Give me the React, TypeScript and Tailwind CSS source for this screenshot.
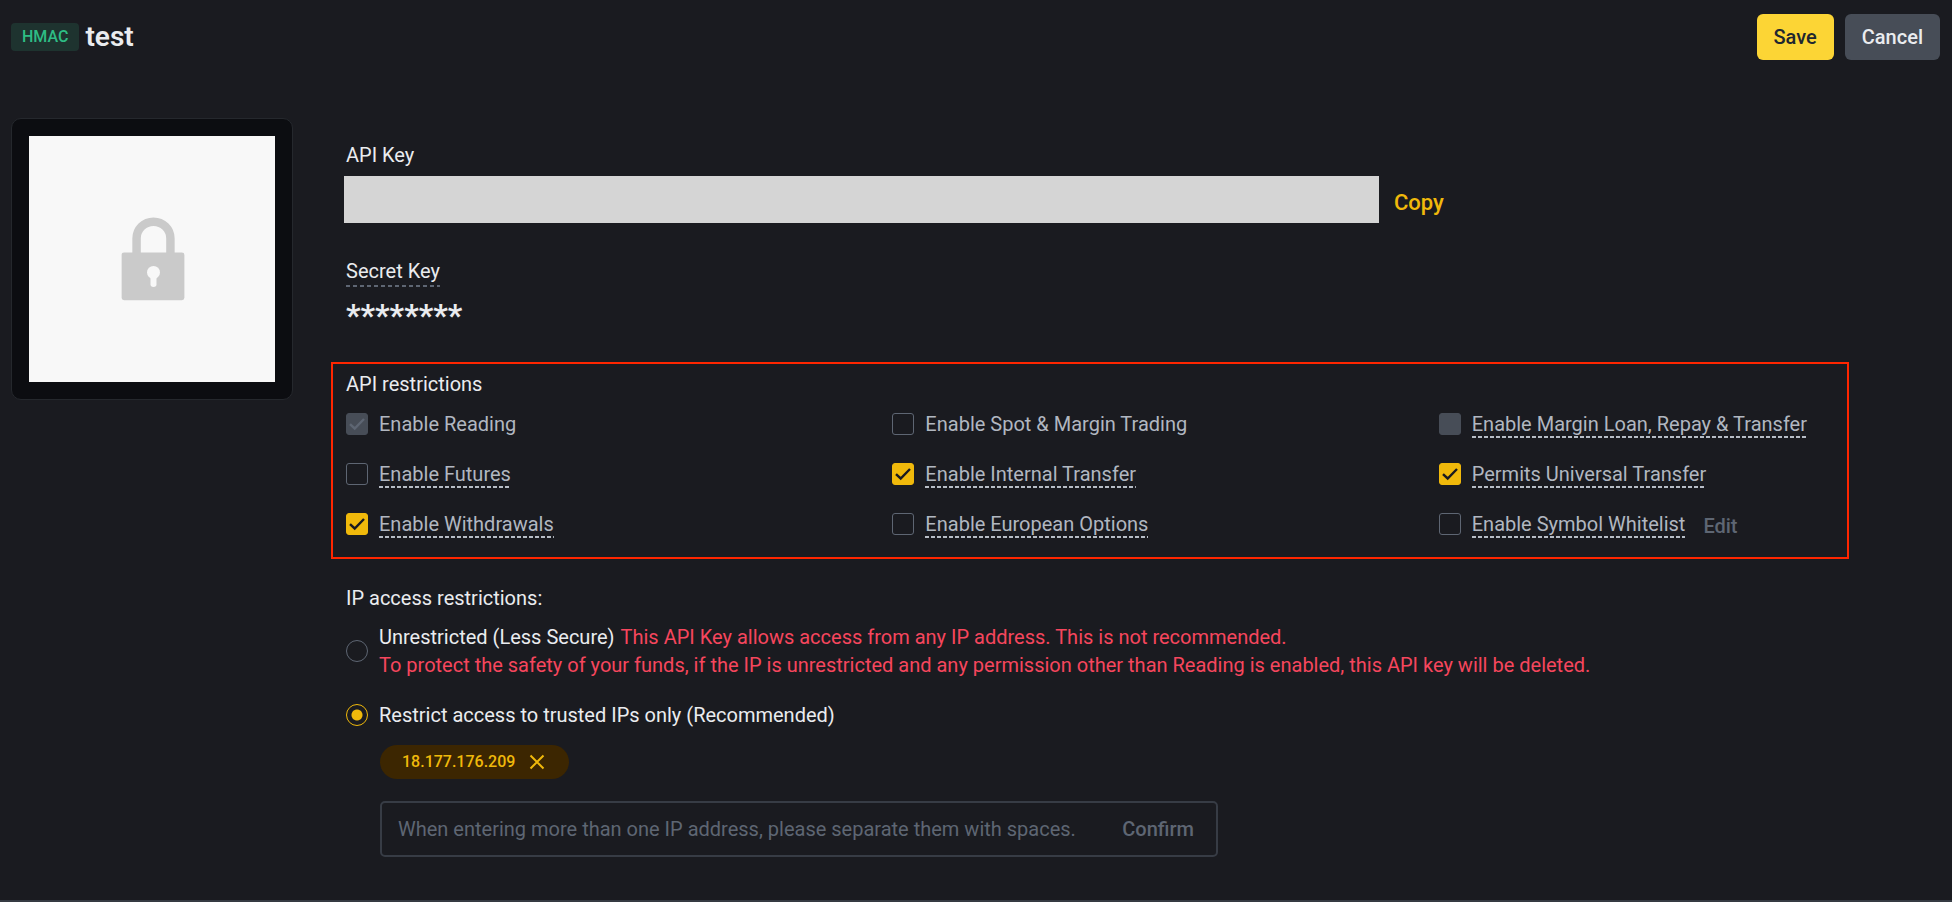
import { useState } from "react";

interface Restriction {
  id: string;
  label: string;
  hint?: boolean;
  disabled?: boolean;
  editable?: boolean;
}

const restrictions: Restriction[] = [
  { id: "reading", label: "Enable Reading", disabled: true },
  { id: "spot", label: "Enable Spot & Margin Trading" },
  { id: "loan", label: "Enable Margin Loan, Repay & Transfer", hint: true, disabled: true },
  { id: "futures", label: "Enable Futures", hint: true },
  { id: "internal", label: "Enable Internal Transfer", hint: true },
  { id: "universal", label: "Permits Universal Transfer", hint: true },
  { id: "withdrawals", label: "Enable Withdrawals", hint: true },
  { id: "options", label: "Enable European Options", hint: true },
  { id: "whitelist", label: "Enable Symbol Whitelist", hint: true, editable: true },
];

const dashed =
  "bg-[repeating-linear-gradient(90deg,#b7bdc6_0_4px,transparent_4px_6px)] bg-[length:100%_2px] bg-bottom bg-no-repeat";
const dashedMuted =
  "bg-[repeating-linear-gradient(90deg,#5e6673_0_4px,transparent_4px_7px)] bg-[length:100%_2px] bg-bottom bg-no-repeat";

function LockPicture() {
  return (
    <div className="w-[282px] shrink-0 self-start rounded-[10px] border border-[#25282d] bg-[#0c0d11] p-[17px]">
      <svg viewBox="0 0 247 247" className="block w-full bg-[#f8f8f8]" role="img" aria-label="Locked">
        <path d="M108 120V103a17 17 0 0 1 34 0v17" fill="none" stroke="#cacaca" strokeWidth="8.5" />
        <rect x="93" y="117" width="63" height="48" rx="2.5" fill="#cacaca" />
        <circle cx="125" cy="137" r="6.5" fill="#f8f8f8" />
        <path d="M122 140h6v9a3 2.500 0 0 1-6 0z" fill="#f8f8f8" />
      </svg>
    </div>
  );
}

interface RestrictionItemProps {
  item: Restriction;
  checked: boolean;
  onToggle: () => void;
}

function RestrictionItem({ item, checked, onToggle }: RestrictionItemProps) {
  return (
    <div className="flex items-center">
      <span className="grid size-[22px] shrink-0 place-items-center">
        <input
          id={item.id}
          type="checkbox"
          checked={checked}
          disabled={item.disabled}
          onChange={onToggle}
          className="col-start-1 row-start-1 size-[22px] appearance-none rounded-[3px] border border-[#5e6673] checked:border-[#f0b90b] checked:bg-[#f0b90b] disabled:border-[#474d57] disabled:bg-[#474d57]"
        />
        {checked && (
          <svg
            viewBox="0 0 22 22"
            className={`pointer-events-none col-start-1 row-start-1 size-[22px] ${
              item.disabled ? "text-[#5e6673]" : "text-[#181a20]"
            }`}
          >
            <path d="M4 11.200l4.700 4.300L18 6" fill="none" stroke="currentColor" strokeWidth="2.4" />
          </svg>
        )}
      </span>
      <label
        htmlFor={item.id}
        className={`ml-[11px] text-xl leading-7 whitespace-nowrap text-[#b1b7c0] ${item.hint ? dashed : ""}`}
      >
        {item.label}
      </label>
      {item.editable && (
        <button type="button" className="mt-1 ml-[18px] text-xl leading-6 font-medium text-[#5e6673]">
          Edit
        </button>
      )}
    </div>
  );
}

export default function App() {
  const [enabled, setEnabled] = useState(["reading", "internal", "universal", "withdrawals"]);
  const [access, setAccess] = useState("trusted");
  const [ips, setIps] = useState(["18.177.176.209"]);
  const [draft, setDraft] = useState("");

  const toggle = (id: string) =>
    setEnabled((prev) => (prev.includes(id) ? prev.filter((x) => x !== id) : [...prev, id]));

  const addIps = () => {
    setIps([...ips, ...draft.split(" ").filter(Boolean)]);
    setDraft("");
  };

  const radio =
    "size-[22px] shrink-0 appearance-none rounded-full border border-[#5e6673] checked:border-[#f0b90b] checked:bg-[radial-gradient(circle,#f0b90b_0_5px,transparent_6px)]";

  return (
    <div className="min-h-screen border-b-2 border-[#353a42] bg-[#1a1b20] font-['Roboto','Liberation_Sans',sans-serif] text-[#eaecef]">
      <header className="flex items-center justify-between pt-3.5 pr-3 pl-[11px]">
        <div className="flex items-center gap-1.5">
          <span className="rounded bg-[#1e332f] px-[11px] text-base leading-7 font-medium text-[#2ebd85]">HMAC</span>
          <h1 className="text-[28px] leading-8 font-semibold">test</h1>
        </div>
        <div className="flex gap-[11px]">
          <button type="button" className="h-[46px] rounded-md bg-[#fcd535] px-[17px] text-xl font-medium text-[#202630]">
            Save
          </button>
          <button type="button" className="h-[46px] rounded-md bg-[#474d57] px-[17px] text-xl font-medium text-[#eaecef]">
            Cancel
          </button>
        </div>
      </header>

      <main className="flex gap-[38px] pt-[58px] pr-[103px] pb-8 pl-[11px]">
        <LockPicture />

        <div className="min-w-0 flex-1 pt-[23px] text-xl leading-7">
          <div className="px-[13px]">
            <p className="pl-0.5">API Key</p>
            <div className="mt-[7px] flex items-center gap-[15px]">
              <div className="h-[47px] w-full max-w-[1035px] bg-[#d5d5d5]" />
              <button type="button" className="mt-1.5 text-[22px] leading-7 font-medium text-[#f0b90b]">
                Copy
              </button>
            </div>
          </div>

          <div className="mt-[34px] px-[15px]">
            <span className={`inline-block pb-0.5 ${dashedMuted}`}>Secret Key</span>
            <p className="mt-3 text-[32px] leading-8 font-bold">********</p>
          </div>

          <section className="mt-[31px] border-2 border-[#ff2600] px-[13px] pt-1.5 pb-[19px]">
            <h2>API restrictions</h2>
            <div className="mt-3 grid grid-cols-[546fr_546fr_395fr] gap-y-[22px]">
              {restrictions.map((item) => (
                <RestrictionItem
                  key={item.id}
                  item={item}
                  checked={enabled.includes(item.id)}
                  onToggle={() => toggle(item.id)}
                />
              ))}
            </div>
          </section>

          <section className="mt-[25px] px-[15px]">
            <h2>IP access restrictions:</h2>
            <div className="mt-[11px] flex items-center gap-[11px]">
              <input
                id="unrestricted"
                type="radio"
                name="access"
                checked={access === "unrestricted"}
                onChange={() => setAccess("unrestricted")}
                className={radio}
              />
              <label htmlFor="unrestricted">
                Unrestricted (Less Secure)
                <span className="ml-1.5 text-[#f6465d]">
                  This API Key allows access from any IP address. This is not recommended.
                  <br />
                  To protect the safety of your funds, if the IP is unrestricted and any permission other than Reading is
                  enabled, this API key will be deleted.
                </span>
              </label>
            </div>
            <div className="mt-[22px] flex items-center gap-[11px]">
              <input
                id="trusted"
                type="radio"
                name="access"
                checked={access === "trusted"}
                onChange={() => setAccess("trusted")}
                className={radio}
              />
              <label htmlFor="trusted">Restrict access to trusted IPs only (Recommended)</label>
            </div>

            <div className="mt-4 ml-[34px] flex flex-wrap gap-3">
              {ips.map((ip) => (
                <span
                  key={ip}
                  className="flex h-[34px] items-center gap-3.5 rounded-full bg-[#3c2601] pr-6 pl-[22px] text-base font-medium text-[#f0b90b]"
                >
                  {ip}
                  <button type="button" aria-label={`Remove ${ip}`} onClick={() => setIps(ips.filter((x) => x !== ip))}>
                    <svg viewBox="0 0 16 16" className="block size-4">
                      <path d="M1.500 1.500l13 13M14.500 1.500l-13 13" stroke="currentColor" strokeWidth="2" />
                    </svg>
                  </button>
                </span>
              ))}
            </div>

            <div className="mt-[22px] ml-[34px] flex h-14 max-w-[838px] items-center rounded-[5px] border-2 border-[#373c45] pr-[22px] pl-4">
              <input
                type="text"
                aria-label="Trusted IP addresses"
                value={draft}
                onChange={(e) => setDraft(e.target.value)}
                placeholder="When entering more than one IP address, please separate them with spaces."
                className="min-w-0 flex-1 bg-transparent outline-none placeholder:text-[#5e6673]"
              />
              <button type="button" onClick={addIps} className="ml-4 font-medium text-[#5e6673]">
                Confirm
              </button>
            </div>
          </section>
        </div>
      </main>
    </div>
  );
}
